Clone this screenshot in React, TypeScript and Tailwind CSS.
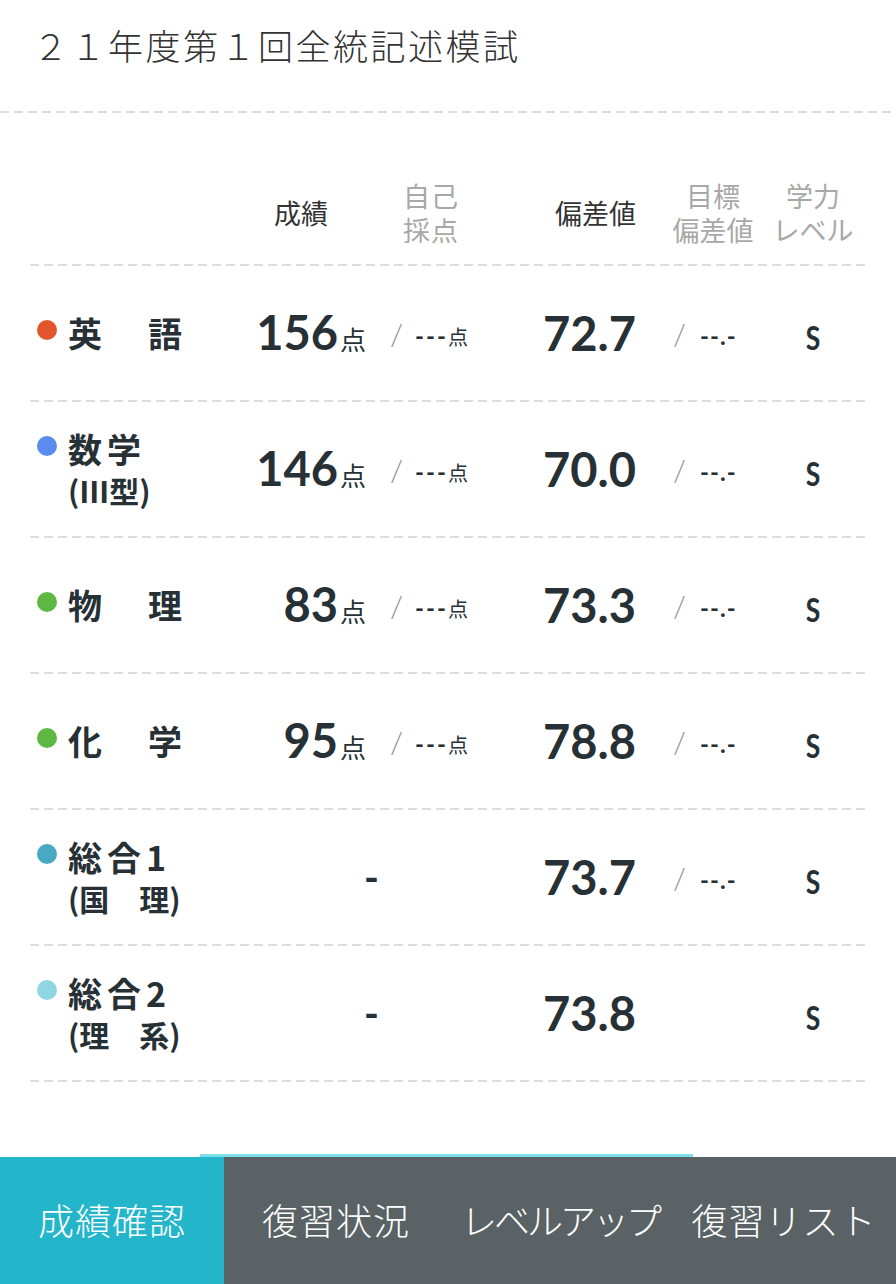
const JP = "font-['Noto_Sans_CJK_JP',sans-serif]";
const NUM = "font-['Lato','Noto_Sans_CJK_JP',sans-serif]";

interface Row {
  color: string;
  name: string;
  sub?: string;
  score?: string;
  dev: string;
  target: boolean;
}

const rows: Row[] = [
  { color: "bg-[#e4552d]", name: "英　語", score: "156", dev: "72.7", target: true },
  { color: "bg-[#5a8bef]", name: "数学", sub: "(Ⅲ型)", score: "146", dev: "70.0", target: true },
  { color: "bg-[#5cb842]", name: "物　理", score: "83", dev: "73.3", target: true },
  { color: "bg-[#5cb842]", name: "化　学", score: "95", dev: "78.8", target: true },
  { color: "bg-[#48a9c3]", name: "総合1", sub: "(国　理)", dev: "73.7", target: true },
  { color: "bg-[#8fd6e2]", name: "総合2", sub: "(理　系)", dev: "73.8", target: false },
];

function Dashed() {
  return <div className="h-[2px] w-full bg-[repeating-linear-gradient(to_right,#dcdcdc_0_9px,transparent_9px_14px)]" />;
}

function SubjectRow({ r }: { r: Row }) {
  return (
    <>
      <div className="flex h-[134px] items-center text-[#263035]">
        {/* subject */}
        <div className="flex w-[210px] items-start pl-[7px]">
          <span className={`mt-[7px] h-[20px] w-[20px] shrink-0 rounded-full ${r.color}`} />
          <div className={`ml-[11px] text-[34px] font-bold leading-[40px] ${r.sub ? "tracking-[5px]" : "tracking-[6px]"} ${JP}`}>
            {r.name}
            {r.sub && (
              <>
                <br />
                <span className="text-[30px] leading-[38px] tracking-normal">{r.sub}</span>
              </>
            )}
          </div>
        </div>
        {r.score ? (
          <>
            <div className={`flex w-[126px] items-baseline justify-end ${NUM}`}>
              <span className="text-[47px] font-bold leading-none">{r.score}</span>
              <span className={`ml-[2px] text-[26px] ${JP}`}>点</span>
            </div>
            <div className={`flex w-[114px] items-baseline pl-[24px] ${NUM}`}>
              <span className="text-[30px] font-light text-[#8f8f8f]">/</span>
              <span className="ml-[12px] text-[24px] font-bold tracking-[2px]">---</span>
              <span className={`text-[20px] ${JP}`}>点</span>
            </div>
          </>
        ) : (
          <div className={`w-[240px] pl-[124px] text-[40px] font-bold ${NUM}`}>-</div>
        )}
        <div className={`w-[156px] text-right text-[47px] font-bold leading-none ${NUM}`}>{r.dev}</div>
        <div className={`flex w-[124px] items-baseline pl-[37px] ${NUM}`}>
          {r.target && (
            <>
              <span className="text-[30px] font-light text-[#8f8f8f]">/</span>
              <span className="ml-[14px] text-[24px] font-bold tracking-[1px]">--.-</span>
            </>
          )}
        </div>
        <div className={`w-[106px] text-center ${NUM}`}>
          <span className="inline-block scale-x-75 text-[46px] font-semibold leading-none">s</span>
        </div>
      </div>
      <Dashed />
    </>
  );
}

export default function App() {
  return (
    <div className={`relative flex h-[1284px] w-[896px] flex-col overflow-hidden bg-white ${JP}`}>
      <div className="h-[111px] pl-[33px] pt-[20px] text-[35px] font-light leading-[50px] tracking-[2.5px] text-[#333]">
        ２１年度第１回全統記述模試
      </div>
      <Dashed />

      <div className="mx-[30px]">
        <div className="flex items-center pb-[17px] pt-[66px] text-[27px] leading-[34px]">
          <div className="w-[210px]" />
          <div className="w-[126px] pr-[38px] text-right text-[#333]">成績</div>
          <div className="w-[114px] pl-[37px] tracking-[1px] text-[#a8a8a8]">
            自己
            <br />
            採点
          </div>
          <div className="w-[156px] text-right text-[#333]">偏差値</div>
          <div className="w-[124px] pl-[30px] text-center text-[#a8a8a8]">
            目標
            <br />
            偏差値
          </div>
          <div className="w-[106px] text-center text-[#a8a8a8]">
            学力
            <br />
            レベル
          </div>
        </div>
        <Dashed />
        {rows.map((r) => (
          <SubjectRow key={r.name} r={r} />
        ))}
      </div>

      <div className="flex-1" />

      <div className="relative grid h-[127px] grid-cols-4 text-[36px] font-light text-white">
        <div className="absolute left-[200px] top-[-3px] h-[3px] w-[493px] bg-[#7fdfea]" />
        <div className="flex items-center justify-center bg-[#23b6cb] pb-[4px] tracking-[1px]">成績確認</div>
        <div className="flex items-center justify-center bg-[#5a6266] pb-[4px] tracking-[1px]">復習状況</div>
        <div className="flex items-center justify-center bg-[#5a6266] pb-[4px] tracking-[-3px]">レベルアップ</div>
        <div className="flex items-center justify-center bg-[#5a6266] pb-[4px] tracking-[1px]">復習リスト</div>
      </div>
    </div>
  );
}
